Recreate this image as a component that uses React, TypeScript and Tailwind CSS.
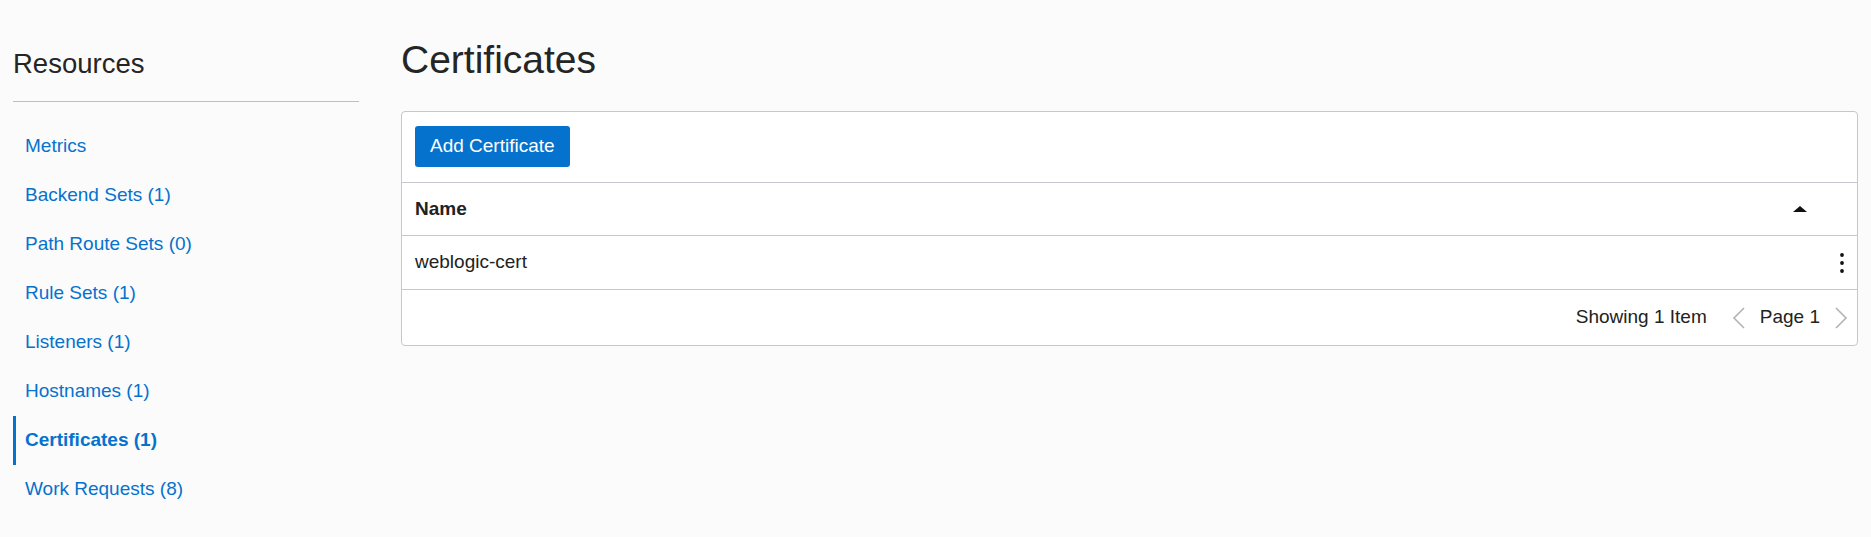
import React from 'react';

const navItems = [
  { label: 'Metrics' },
  { label: 'Backend Sets (1)' },
  { label: 'Path Route Sets (0)' },
  { label: 'Rule Sets (1)' },
  { label: 'Listeners (1)' },
  { label: 'Hostnames (1)' },
  { label: 'Certificates (1)', active: true },
  { label: 'Work Requests (8)' },
];

const Chevron: React.FC<{ dir: 'left' | 'right' }> = ({ dir }) => (
  <svg width="13" height="24" viewBox="0 0 13 24" fill="none">
    <path
      d={dir === 'left' ? 'M12 2 L2 12 L12 22' : 'M1 2 L11 12 L1 22'}
      stroke="#b3b3b3"
      strokeWidth="1.6"
    />
  </svg>
);

export default function App() {
  return (
    <div className="min-h-screen bg-[#fbfbfb] flex px-[13px] font-['Liberation_Sans',Arial,sans-serif] text-[#222]">
      {/* Sidebar */}
      <aside className="w-[346px] shrink-0 pt-[48px]">
        <h2 className="text-[27.5px] leading-[32px] text-[#252525]">Resources</h2>
        <div className="mt-[21px] h-px bg-[#bcc0c6]"></div>
        <nav className="mt-[20px] flex flex-col">
          {navItems.map((item) => (
            <a
              key={item.label}
              href="#"
              className={
                item.active
                  ? 'h-[49px] flex items-center border-l-[3px] border-[#0572ce] pl-[9px] text-[19px] font-bold text-[#0572ce]'
                  : 'h-[49px] flex items-center border-l-[3px] border-transparent pl-[9px] text-[19px] text-[#0572ce]'
              }
            >
              {item.label}
            </a>
          ))}
        </nav>
      </aside>

      {/* Main */}
      <main className="flex-1 ml-[42px] pt-[38px]">
        <h1 className="text-[39px] leading-[44px] text-[#252525]">Certificates</h1>

        <div className="mt-[29px] bg-white border border-[#c4c8cc] rounded-[4px]">
          {/* Toolbar */}
          <div className="px-[13px] pt-[14px] pb-[15px] border-b border-[#c4c8cc]">
            <button className="h-[41px] px-[15px] bg-[#0572ce] text-white text-[19px] rounded-[3px]">
              Add Certificate
            </button>
          </div>

          {/* Header */}
          <div className="h-[53px] flex items-center justify-between pl-[13px] pr-[50px] border-b border-[#c4c8cc]">
            <span className="text-[19px] font-bold">Name</span>
            <svg width="14" height="6" viewBox="0 0 14 6">
              <path d="M0 6 L7 0 L14 6 Z" fill="#111" />
            </svg>
          </div>

          {/* Row */}
          <div className="h-[54px] flex items-center justify-between pl-[13px] pr-[13px] border-b border-[#c4c8cc]">
            <span className="text-[19px]">weblogic-cert</span>
            <svg width="4" height="20" viewBox="0 0 4 20">
              <circle cx="2" cy="2" r="1.9" fill="#111" />
              <circle cx="2" cy="10" r="1.9" fill="#111" />
              <circle cx="2" cy="18" r="1.9" fill="#111" />
            </svg>
          </div>

          {/* Footer */}
          <div className="h-[55px] flex items-center justify-end pr-[9px]">
            <span className="text-[19px]">Showing 1 Item</span>
            <span className="ml-[25px]"><Chevron dir="left" /></span>
            <span className="ml-[15px] text-[19px]">Page 1</span>
            <span className="ml-[15px]"><Chevron dir="right" /></span>
          </div>
        </div>
      </main>
    </div>
  );
}
